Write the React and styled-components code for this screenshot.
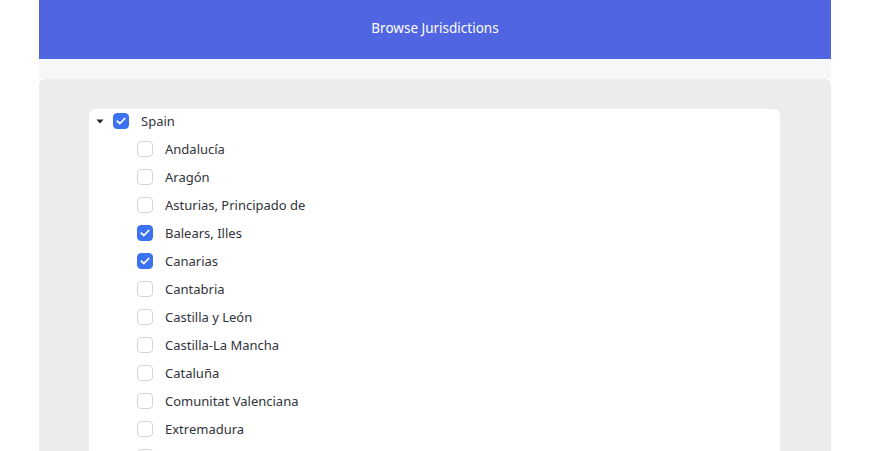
import React, { useState } from "react";
import styled, { createGlobalStyle } from "styled-components";

const GlobalStyle = createGlobalStyle`
  html, body {
    margin: 0;
    padding: 0;
    background: #ffffff;
    font-family: "Noto Sans", "Open Sans", sans-serif;
    overflow: hidden;
  }
`;

const Page = styled.div`
  padding-left: 39px;
  width: 792px;
`;

const Header = styled.div`
  height: 59px;
  background-color: #4f65e1;
  color: #ffffff;
  display: flex;
  align-items: center;
  justify-content: center;
  font-size: 13.5px;
  padding-bottom: 4px;
  box-sizing: border-box;
`;

const Band = styled.div`
  height: 20px;
  background-color: #f6f7f9;
`;

const Panel = styled.div`
  background-color: #ebecee;
  border-radius: 6px 6px 0 0;
  padding: 30px 51px 30px 50px;
`;

const Card = styled.div`
  background-color: #ffffff;
  border-radius: 6px;
  padding-bottom: 8px;
`;

const Row = styled.div`
  display: flex;
  align-items: center;
  height: 24px;
  margin-top: ${(p) => (p.$first ? "0" : "4px")};
  padding-left: ${(p) => (p.$level === 0 ? "7px" : "48px")};
  color: #30343b;
  font-size: 13px;
`;

const Caret = styled.span`
  width: 17px;
  display: flex;
  align-items: center;
  justify-content: flex-start;
`;

const Box = styled.span`
  width: 16px;
  height: 16px;
  box-sizing: border-box;
  border-radius: 4px;
  border: 1px solid ${(p) => (p.$checked ? "#3b71f3" : "#d4d6da")};
  background-color: ${(p) => (p.$checked ? "#3b71f3" : "#ffffff")};
  display: flex;
  align-items: center;
  justify-content: center;
  margin-right: 12px;
  flex-shrink: 0;
`;

const Label = styled.span`
  white-space: nowrap;
`;

const regions = [
  { name: "Andalucía", checked: false },
  { name: "Aragón", checked: false },
  { name: "Asturias, Principado de", checked: false },
  { name: "Balears, Illes", checked: true },
  { name: "Canarias", checked: true },
  { name: "Cantabria", checked: false },
  { name: "Castilla y León", checked: false },
  { name: "Castilla-La Mancha", checked: false },
  { name: "Cataluña", checked: false },
  { name: "Comunitat Valenciana", checked: false },
  { name: "Extremadura", checked: false },
  { name: "Galicia", checked: false },
  { name: "Madrid, Comunidad de", checked: false },
];

function Check({ checked }) {
  return (
    <Box $checked={checked}>
      {checked && (
        <svg width="10" height="8" viewBox="0 0 10 8">
          <path
            d="M1.3 4.1 L3.9 6.5 L8.7 1.5"
            fill="none"
            stroke="#ffffff"
            strokeWidth="1.8"
            strokeLinecap="round"
            strokeLinejoin="round"
          />
        </svg>
      )}
    </Box>
  );
}

export default function App() {
  const [items] = useState(regions);
  return (
    <Page>
      <GlobalStyle />
      <Header>Browse Jurisdictions</Header>
      <Band />
      <Panel>
        <Card>
          <Row $level={0} $first>
            <Caret>
              <svg width="8" height="5" viewBox="0 0 8 5">
                <path d="M0.5 0.5 L7.5 0.5 L4 4.5 Z" fill="#222" />
              </svg>
            </Caret>
            <Check checked />
            <Label>Spain</Label>
          </Row>
          {items.map((r) => (
            <Row key={r.name} $level={1}>
              <Check checked={r.checked} />
              <Label>{r.name}</Label>
            </Row>
          ))}
        </Card>
      </Panel>
    </Page>
  );
}
